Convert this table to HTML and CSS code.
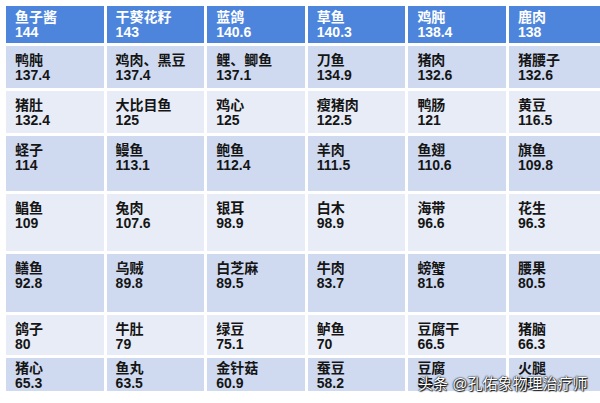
FILE: index.html
```html
<!DOCTYPE html>
<html lang="zh">
<head>
<meta charset="utf-8">
<link rel="stylesheet" href="styles.css">
</head>
<body>
<div class="page">
  <div class="table">
    <div class="cell h"><span>鱼子酱</span><span>144</span></div>
    <div class="cell h"><span>干葵花籽</span><span>143</span></div>
    <div class="cell h"><span>蓝鸽</span><span>140.6</span></div>
    <div class="cell h"><span>草鱼</span><span>140.3</span></div>
    <div class="cell h"><span>鸡肫</span><span>138.4</span></div>
    <div class="cell h"><span>鹿肉</span><span>138</span></div>

    <div class="cell a"><span>鸭肫</span><span>137.4</span></div>
    <div class="cell a"><span>鸡肉、黑豆</span><span>137.4</span></div>
    <div class="cell a"><span>鲤、鲫鱼</span><span>137.1</span></div>
    <div class="cell a"><span>刀鱼</span><span>134.9</span></div>
    <div class="cell a"><span>猪肉</span><span>132.6</span></div>
    <div class="cell a"><span>猪腰子</span><span>132.6</span></div>

    <div class="cell b"><span>猪肚</span><span>132.4</span></div>
    <div class="cell b"><span>大比目鱼</span><span>125</span></div>
    <div class="cell b"><span>鸡心</span><span>125</span></div>
    <div class="cell b"><span>瘦猪肉</span><span>122.5</span></div>
    <div class="cell b"><span>鸭肠</span><span>121</span></div>
    <div class="cell b"><span>黄豆</span><span>116.5</span></div>

    <div class="cell a"><span>蛏子</span><span>114</span></div>
    <div class="cell a"><span>鳗鱼</span><span>113.1</span></div>
    <div class="cell a"><span>鲍鱼</span><span>112.4</span></div>
    <div class="cell a"><span>羊肉</span><span>111.5</span></div>
    <div class="cell a"><span>鱼翅</span><span>110.6</span></div>
    <div class="cell a"><span>旗鱼</span><span>109.8</span></div>

    <div class="cell b"><span>鲳鱼</span><span>109</span></div>
    <div class="cell b"><span>兔肉</span><span>107.6</span></div>
    <div class="cell b"><span>银耳</span><span>98.9</span></div>
    <div class="cell b"><span>白木</span><span>98.9</span></div>
    <div class="cell b"><span>海带</span><span>96.6</span></div>
    <div class="cell b"><span>花生</span><span>96.3</span></div>

    <div class="cell a"><span>鳝鱼</span><span>92.8</span></div>
    <div class="cell a"><span>乌贼</span><span>89.8</span></div>
    <div class="cell a"><span>白芝麻</span><span>89.5</span></div>
    <div class="cell a"><span>牛肉</span><span>83.7</span></div>
    <div class="cell a"><span>螃蟹</span><span>81.6</span></div>
    <div class="cell a"><span>腰果</span><span>80.5</span></div>

    <div class="cell b"><span>鸽子</span><span>80</span></div>
    <div class="cell b"><span>牛肚</span><span>79</span></div>
    <div class="cell b"><span>绿豆</span><span>75.1</span></div>
    <div class="cell b"><span>鲈鱼</span><span>70</span></div>
    <div class="cell b"><span>豆腐干</span><span>66.5</span></div>
    <div class="cell b"><span>猪脑</span><span>66.3</span></div>

    <div class="cell a last"><span>猪心</span><span>65.3</span></div>
    <div class="cell a last"><span>鱼丸</span><span>63.5</span></div>
    <div class="cell a last"><span>金针菇</span><span>60.9</span></div>
    <div class="cell a last"><span>蚕豆</span><span>58.2</span></div>
    <div class="cell a last"><span>豆腐</span><span>55.5</span></div>
    <div class="cell a last"><span>火腿</span><span>55</span></div>
  </div>
  <div class="watermark">头条 @孔佑象物理治疗师</div>
</div>
</body>
</html>
```

FILE: styles.css
```css
html, body {
  margin: 0;
  padding: 0;
  background: #ffffff;
  overflow: hidden;
}

.page {
  position: relative;
  width: 600px;
  height: 403px;
  overflow: hidden;
  font-family: "Liberation Sans", "Noto Sans CJK SC", sans-serif;
}

.table {
  display: grid;
  grid-template-columns: repeat(6, 97.6px);
  grid-template-rows: 37px 42px 42px 55px 57px 58px 40px 33px;
  gap: 3px;
  padding: 6px 0 0 6px;
}

.cell {
  display: flex;
  flex-direction: column;
  padding: 7px 0 0 9px;
  font-size: 14px;
  line-height: 15px;
  font-weight: bold;
  color: #151515;
}

.cell.h {
  padding-top: 4px;
  background: #4d85dd;
  color: #ffffff;
}

.cell.a {
  background: #cfdaf1;
}

.cell.b {
  background: #e7ecf6;
}

.cell.last {
  padding-top: 3px;
}

.watermark {
  position: absolute;
  left: 418px;
  top: 375px;
  font-size: 15px;
  line-height: 18px;
  color: #ffffff;
  white-space: nowrap;
  text-shadow: 0 0 1px #000, 0 0 2px #000, 1px 1px 1px #222;
}
```
